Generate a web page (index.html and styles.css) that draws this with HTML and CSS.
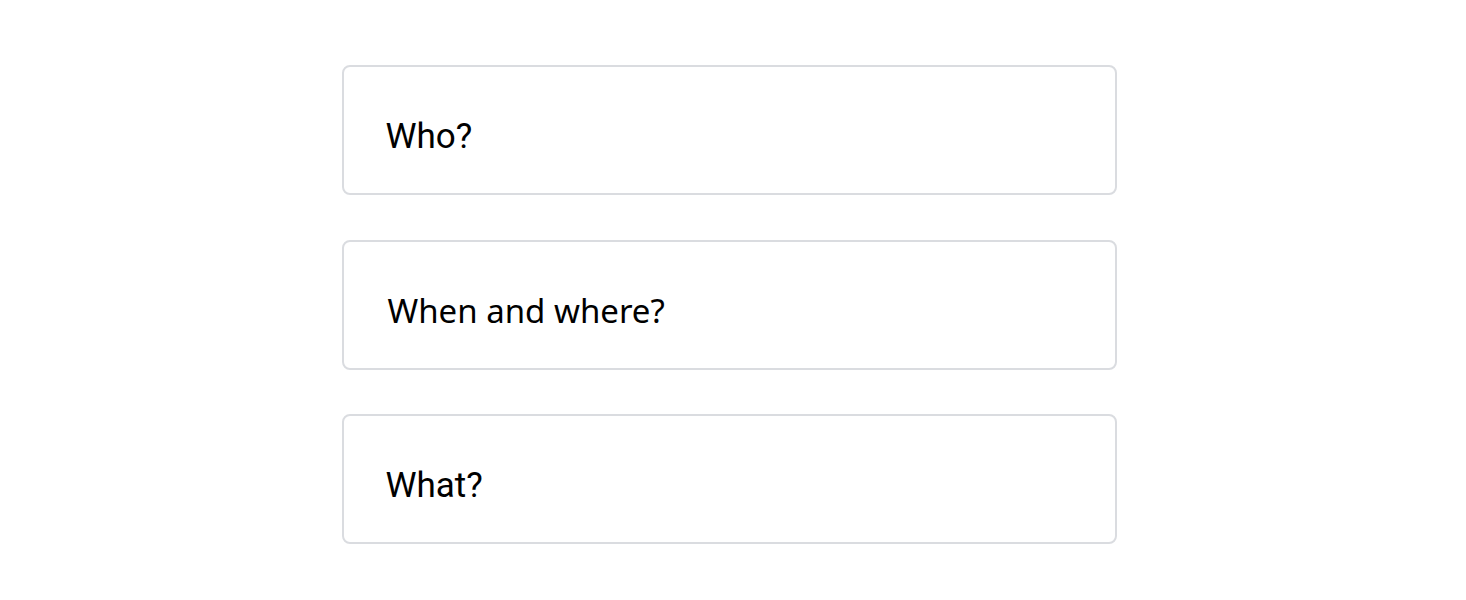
FILE: index.html
```html
<!DOCTYPE html>
<html>
<head>
<meta charset="utf-8">
<link rel="stylesheet" href="styles.css">
</head>
<body>
<div class="list">
  <div class="card"><span class="label">Who?</span></div>
  <div class="card"><span class="label label-wide">When and where?</span></div>
  <div class="card"><span class="label">What?</span></div>
</div>
</body>
</html>
```
FILE: styles.css
```css
html, body {
  margin: 0;
  padding: 0;
  background: #ffffff;
}
.list {
  width: 775px;
  margin: 65px 0 0 341.5px;
  display: flex;
  flex-direction: column;
  gap: 44.5px;
}
.card {
  box-sizing: border-box;
  height: 130px;
  border: 2px solid #dadce0;
  border-radius: 8px;
  display: flex;
  align-items: center;
  padding: 12px 0 0 42px;
}
.label {
  font-family: Roboto, "Liberation Sans", sans-serif;
  font-size: 35px;
  color: #000;
}
.label-wide {
  font-family: "Noto Sans", Roboto, sans-serif;
  font-size: 33px;
  padding-left: 2px;
}
```
